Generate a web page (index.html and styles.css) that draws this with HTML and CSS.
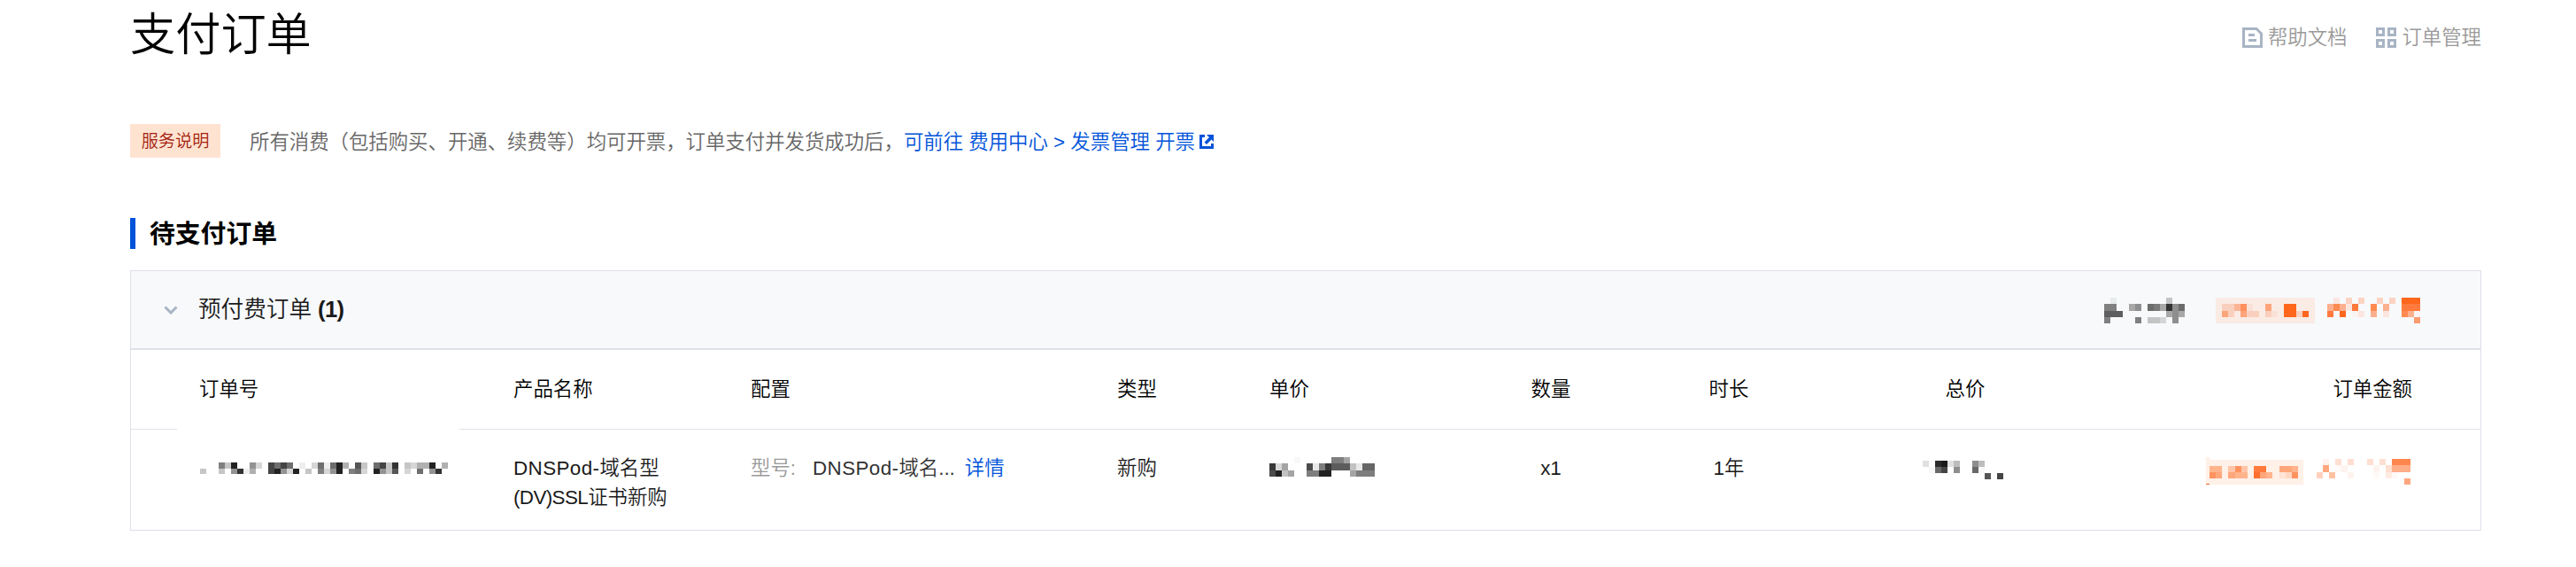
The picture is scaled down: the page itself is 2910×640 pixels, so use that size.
FILE: index.html
```html
<!DOCTYPE html>
<html lang="zh-CN">
<head>
    <meta charset="UTF-8">
    <meta name="viewport" content="width=device-width, initial-scale=1.0">
    <title>支付订单</title>
    <link rel="stylesheet" href="styles.css">
</head>
<body>

    <div class="page">
        <!-- Page header -->
        <header class="page-header">
            <h1>支付订单</h1>
            <nav class="header-links">
                <a href="#">
                    <svg class="icon" viewBox="0 0 23 23">
                        <path d="M1.5 1.5H16L21.5 7V21.5H1.5Z" fill="none" stroke="#a8b4c4" stroke-width="3"/>
                        <path d="M7 7h7v3H7zM7 13h9v3H7z" fill="#a8b4c4"/>
                    </svg>
                    <span>帮助文档</span>
                </a>
                <a href="#">
                    <svg class="icon" viewBox="0 0 23 23">
                        <path d="M1.5 1.5h7v7h-7zM14.5 1.5h7v7h-7zM1.5 14.5h7v7h-7zM14.5 14.5h7v7h-7z" fill="none" stroke="#a8b4c4" stroke-width="3"/>
                    </svg>
                    <span>订单管理</span>
                </a>
            </nav>
        </header>

        <!-- Service notice -->
        <div class="notice">
            <span class="notice-tag">服务说明</span>
            <p>所有消费（包括购买、开通、续费等）均可开票，订单支付并发货成功后，<a href="#">可前往 费用中心 &gt; 发票管理 开票<svg class="link-icon" viewBox="0 0 16 16"><path d="M0 0h6v3H3v10h10V10h3v6H0zM8 0h8v8l-2.500-2.500-5.500 5.500L5.500 8.500l5.500-5.500z" fill="#0052d9"/></svg></a></p>
        </div>

        <h2>待支付订单</h2>

        <!-- Order panel -->
        <section class="panel">
            <div class="panel-header">
                <svg class="chevron" viewBox="0 0 16 10"><path d="M1.500 1.500L8 8l6.500-6.500" fill="none" stroke="#a8b4c4" stroke-width="3"/></svg>
                <span class="panel-title">预付费订单 <b>(1)</b></span>
                <div class="panel-amount">
                    <svg class="mosaic header-label" viewBox="0 0 13 4" preserveAspectRatio="none">
                        <path fill="#e8ebeb" d="M1 0h1v1h-1z"/>
                        <path fill="#c4c4c4" d="M10 0h1v1h-1zM7 3h2v1h-2z"/>
                        <path fill="#808080" d="M0 1h2v1h-2zM0 3h1v1h-1zM5 3h1v1h-1z"/>
                        <path fill="#a8a8a8" d="M4 1h1v1h-1zM9 1h1v1h-1zM10 2h1v1h-1zM12 2h1v1h-1z"/>
                        <path fill="#8e8e8e" d="M5 1h1v1h-1zM11 1h1v3h-1z"/>
                        <path fill="#6c6c6c" d="M7 1h1v1h-1zM12 1h1v1h-1z"/>
                        <path fill="#7a7a7a" d="M8 1h1v1h-1z"/>
                        <path fill="#333" d="M10 1h1v1h-1z"/>
                        <path fill="#5e5e60" d="M0 2h3v1h-3z"/>
                        <path fill="#d4d6d6" d="M9 3h1v1h-1z"/>
                    </svg>
                    <svg class="mosaic header-badge" viewBox="0 0 16 4" preserveAspectRatio="none">
                        <path fill="#faebe4" d="M0 0h16v4h-16z"/>
                        <path fill="#f9d0bd" d="M1 1h2v1h-2zM2 2h1v1h-1zM5 2h2v1h-2zM8 2h1v1h-1zM13 2h1v1h-1z"/>
                        <path fill="#fcb497" d="M3 1h1v1h-1z"/>
                        <path fill="#ff8f5c" d="M4 1h1v1h-1z"/>
                        <path fill="#fae1d7" d="M5 1h1v1h-1zM9 2h1v1h-1z"/>
                        <path fill="#fda47a" d="M8 1h1v1h-1zM1 2h1v1h-1zM4 2h1v1h-1z"/>
                        <path fill="#ff671c" d="M11 1h2v2h-2zM14 2h1v1h-1z"/>
                    </svg>
                    <svg class="mosaic header-total" viewBox="0 0 15 4" preserveAspectRatio="none">
                        <path fill="#fbe6df" d="M1 0h1v1h-1zM3 1h1v1h-1zM5 2h1v1h-1zM9 2h1v1h-1z"/>
                        <path fill="#fcd3c3" d="M3 0h1v1h-1zM5 0h1v1h-1zM8 0h1v1h-1zM10 0h1v1h-1z"/>
                        <path fill="#ff671c" d="M12 0h3v1h-3zM2 2h1v1h-1z"/>
                        <path fill="#fcb08f" d="M0 1h1v1h-1zM2 1h1v1h-1zM9 1h1v1h-1zM7 2h1v1h-1zM13 2h1v1h-1z"/>
                        <path fill="#ff8a52" d="M1 1h1v1h-1zM7 1h1v1h-1zM12 2h1v1h-1z"/>
                        <path fill="#ff7a3c" d="M4 1h1v1h-1zM12 1h3v1h-3zM0 2h1v1h-1z"/>
                        <path fill="#f9f3f2" d="M4 2h1v1h-1zM14 2h1v1h-1z"/>
                        <path fill="#fd9b70" d="M14 3h1v1h-1z"/>
                    </svg>
                </div>
            </div>

            <div class="row row-head">
                <div class="cell spacer"></div>
                <div class="cell order-no">订单号</div>
                <div class="cell">产品名称</div>
                <div class="cell">配置</div>
                <div class="cell">类型</div>
                <div class="cell">单价</div>
                <div class="cell center">数量</div>
                <div class="cell center">时长</div>
                <div class="cell center">总价</div>
                <div class="cell right">订单金额</div>
            </div>

            <div class="row row-body">
                <div class="cell spacer"></div>
                <div class="cell order-no">
                    <svg class="mosaic order-id" viewBox="0 0 40 2" preserveAspectRatio="none">
                        <path fill="#222" d="M5 0h1v1h-1zM22 0h1v2h-1zM37 0h1v1h-1zM12 1h1v1h-1zM15 1h1v1h-1zM28 1h1v1h-1z"/>
                        <path fill="#333" d="M31 0h1v1h-1zM6 1h1v1h-1zM38 1h1v1h-1z"/>
                        <path fill="#444" d="M11 0h1v2h-1zM13 0h1v1h-1zM29 0h1v1h-1z"/>
                        <path fill="#555" d="M25 0h1v1h-1zM31 1h1v1h-1z"/>
                        <path fill="#6e6e6e" d="M12 0h1v1h-1zM14 0h1v1h-1zM19 0h1v1h-1zM21 0h1v1h-1zM28 0h1v1h-1zM25 1h1v1h-1zM35 1h1v1h-1z"/>
                        <path fill="#808080" d="M3 0h1v1h-1zM19 1h1v1h-1zM24 1h1v1h-1z"/>
                        <path fill="#929292" d="M8 0h1v1h-1zM5 1h1v1h-1zM13 1h1v1h-1zM21 1h1v1h-1zM29 1h1v1h-1zM37 1h1v1h-1z"/>
                        <path fill="#b0b0b0" d="M23 0h1v1h-1zM35 0h2v1h-2zM39 0h1v1h-1zM8 1h1v1h-1z"/>
                        <path fill="#c6c6c6" d="M4 0h1v1h-1zM26 0h1v1h-1zM30 0h1v2h-1zM33 0h1v1h-1zM0 1h1v1h-1zM3 1h1v1h-1zM17 1h1v1h-1z"/>
                        <path fill="#d6d6d6" d="M9 0h1v1h-1zM18 0h1v1h-1zM34 0h1v1h-1zM14 1h1v1h-1zM20 1h1v1h-1zM26 1h1v1h-1zM33 1h1v1h-1z"/>
                        <path fill="#eee" d="M16 0h1v1h-1zM20 0h1v1h-1zM7 1h1v1h-1z"/>
                    </svg>
                </div>
                <div class="cell"><span class="latin-wide">DNSPod-</span>域名型<br><span class="latin-tight">(DV)SSL</span>证书新购</div>
                <div class="cell config">
                    <span class="config-label">型号:</span>
                    <span class="config-value"><span class="latin-wide">DNSPod-</span>域名...</span>
                    <a href="#">详情</a>
                </div>
                <div class="cell">新购</div>
                <div class="cell">
                    <svg class="mosaic unit-price" viewBox="0 0 17 3" preserveAspectRatio="none">
                        <path fill="#222" d="M1 2h1v1h-1zM8 2h2v1h-2z"/>
                        <path fill="#383838" d="M0 1h1v1h-1zM9 1h1v1h-1z"/>
                        <path fill="#4c4c4c" d="M6 1h1v1h-1zM0 2h1v1h-1z"/>
                        <path fill="#5c5c5c" d="M10 1h3v1h-3z"/>
                        <path fill="#666" d="M15 1h2v1h-2z"/>
                        <path fill="#7e7e7e" d="M10 0h2v1h-2zM8 1h1v1h-1zM6 2h2v1h-2zM14 2h3v1h-3z"/>
                        <path fill="#a4a4a4" d="M12 0h1v1h-1zM2 1h1v1h-1zM3 2h1v1h-1zM13 2h1v1h-1z"/>
                        <path fill="#c2c2c2" d="M13 1h1v1h-1zM2 2h1v1h-1z"/>
                        <path fill="#d8d8d8" d="M1 1h1v1h-1z"/>
                        <path fill="#e8e8e8" d="M7 1h1v1h-1zM14 1h1v1h-1z"/>
                        <path fill="#f8f8f8" d="M4 0h1v1h-1z"/>
                    </svg>
                </div>
                <div class="cell center">x1</div>
                <div class="cell center">1年</div>
                <div class="cell center">
                    <svg class="mosaic total-price" viewBox="0 0 13 3" preserveAspectRatio="none">
                        <path fill="#2a2a2a" d="M2 0h1v1h-1z"/>
                        <path fill="#1a1a1a" d="M3 0h1v1h-1z"/>
                        <path fill="#444" d="M3 1h1v1h-1zM12 2h1v1h-1z"/>
                        <path fill="#555" d="M10 2h1v1h-1z"/>
                        <path fill="#686868" d="M2 1h1v1h-1zM8 1h1v1h-1z"/>
                        <path fill="#8e8e8e" d="M8 0h1v1h-1zM5 1h1v1h-1z"/>
                        <path fill="#bdbdbd" d="M5 0h1v1h-1zM9 0h1v1h-1z"/>
                        <path fill="#e0e0e0" d="M0 0h1v1h-1zM4 0h1v1h-1z"/>
                        <path fill="#f8f8f8" d="M1 1h1v1h-1zM9 1h1v1h-1z"/>
                    </svg>
                </div>
                <div class="cell right">
                    <div class="row-amount">
                        <div class="row-badge">
                            <svg class="mosaic badge-cells" viewBox="0 0 14 2" preserveAspectRatio="none">
                                <path fill="#ffb48c" d="M0 0h2v1h-2zM13 0h1v1h-1zM4 1h2v1h-2zM9 1h1v1h-1z"/>
                                <path fill="#ffc5a9" d="M3 0h1v1h-1zM5 0h1v1h-1z"/>
                                <path fill="#ff935f" d="M4 0h1v1h-1zM0 1h1v1h-1zM13 1h1v1h-1z"/>
                                <path fill="#ff7a3b" d="M7 0h2v1h-2z"/>
                                <path fill="#ff6f2b" d="M7 1h1v1h-1z"/>
                                <path fill="#ffa67a" d="M11 0h2v1h-2zM1 1h1v1h-1zM3 1h1v1h-1zM8 1h1v1h-1z"/>
                                <path fill="#ffe3d6" d="M11 1h1v1h-1z"/>
                                <path fill="#ffd6c2" d="M12 1h1v1h-1z"/>
                            </svg>
                        </div>
                        <svg class="mosaic row-total" viewBox="0 0 15 4" preserveAspectRatio="none">
                            <path fill="#fff3ee" d="M1 0h1v1h-1zM4 1h1v1h-1zM9 1h1v1h-1zM5 2h1v1h-1z"/>
                            <path fill="#ffdfd1" d="M3 0h1v1h-1zM5 0h1v1h-1zM8 0h1v1h-1zM10 0h1v1h-1zM11 1h1v1h-1z"/>
                            <path fill="#ff864c" d="M12 0h3v1h-3z"/>
                            <path fill="#ffa77f" d="M1 1h1v1h-1zM14 3h1v1h-1z"/>
                            <path fill="#ffae88" d="M12 1h3v1h-3z"/>
                            <path fill="#fff9f7" d="M3 1h1v1h-1zM9 2h1v1h-1zM12 2h1v1h-1z"/>
                            <path fill="#ffd1bc" d="M0 2h1v1h-1z"/>
                            <path fill="#ffc1a4" d="M2 2h1v1h-1z"/>
                            <path fill="#ffeae2" d="M11 2h1v1h-1z"/>
                        </svg>
                    </div>
                </div>
            </div>
        </section>
    </div>

</body>
</html>
```
FILE: styles.css
```css
* {
    box-sizing: border-box;
}

body {
    margin: 0;
    background-color: #fff;
    color: #1a1a1a;
    font-family: "Liberation Sans", "Noto Sans CJK SC", sans-serif;
    font-size: 22.4px;
    font-weight: 350;
    line-height: 33px;
}

a {
    color: #0052d9;
    text-decoration: none;
}

svg {
    display: block;
    flex: none;
}

.page {
    width: 2656px;
    margin-left: 147px;
}

/* Page header */
.page-header {
    display: flex;
    justify-content: space-between;
    height: 140px;
}

h1 {
    margin: 0;
    font-size: 51.2px;
    font-weight: 350;
    line-height: 79px;
    color: #000;
}

.header-links {
    display: flex;
    gap: 33px;
    height: 85px;
    align-items: center;
}

.header-links a {
    display: flex;
    align-items: center;
    gap: 6px;
    color: #999;
}

.icon {
    width: 23px;
    height: 23px;
}

/* Service notice */
.notice {
    display: flex;
    align-items: center;
    gap: 33px;
    height: 38px;
}

.notice-tag {
    width: 102px;
    height: 38px;
    background-color: #ffe3d1;
    color: #a3210f;
    font-size: 19.2px;
    line-height: 39px;
    text-align: center;
}

.notice p {
    margin: 2px 0 0;
    color: #666;
}

.link-icon {
    display: inline-block;
    width: 16px;
    height: 16px;
    margin-left: 5px;
}

h2 {
    height: 35px;
    margin: 68px 0 24px;
    padding-left: 16px;
    border-left: 6px solid #0052d9;
    font-size: 28.8px;
    line-height: 37px;
    color: #000;
}

/* Order panel */
.panel {
    height: 294px;
    border: 1px solid #dfe1ea;
}

.panel-header {
    display: flex;
    align-items: center;
    height: 89px;
    padding: 0 68px 0 37px;
    background-color: #f7f9fb;
    border-bottom: 2px solid #dfe1ea;
}

.chevron {
    width: 16px;
    height: 10px;
}

.panel-title {
    margin-left: 23px;
    font-size: 25.6px;
}

.panel-title b {
    letter-spacing: -0.7px;
}

.panel-amount {
    display: flex;
    margin: 2px 0 0 auto;
}

.mosaic {
    shape-rendering: crispEdges;
}

.header-label {
    width: 91px;
    height: 29px;
    margin-right: 35px;
}

.header-badge {
    width: 112px;
    height: 29px;
    margin-right: 14px;
}

.header-total {
    width: 105px;
    height: 29px;
}

/* Rows */
.row {
    display: grid;
    grid-template-columns: 52px 319px 268px 414px 172px 279px 200px 202px 332px 1fr;
}

.cell {
    padding-left: 61px;
}

.spacer {
    padding-left: 0;
}

.order-no {
    padding-left: 25px;
}

.center {
    padding-left: 0;
    text-align: center;
}

.right {
    padding-right: 77px;
    text-align: right;
}

.row-head {
    height: 90px;
    line-height: 89px;
    color: #000;
}

.row-head .cell {
    border-bottom: 1px solid #dfe1ea;
}

.row-head .order-no {
    border-bottom: none;
}

.row-body {
    height: 113px;
    padding-top: 27px;
}

.latin-wide {
    letter-spacing: 0.4px;
}

.latin-tight {
    letter-spacing: -0.6px;
}

.order-id {
    width: 280px;
    height: 13px;
    margin: 10px 0 0 1px;
}

.config {
    display: flex;
    color: #333;
}

.config-label {
    margin-right: 19px;
    color: #999;
}

.config-value {
    margin-right: 11px;
}

.unit-price {
    width: 119px;
    height: 22px;
    margin: 4px 0 0;
}

.total-price {
    width: 91px;
    height: 21px;
    margin: 8px 0 0 118px;
}

.row-amount {
    display: flex;
    justify-content: flex-end;
    margin: 6px 2px 0 0;
}

.row-badge {
    position: relative;
    width: 106px;
    height: 28px;
    margin: 1px 15px 0 0;
    padding: 7px 0 0;
    background-color: #fff0e8;
}

/* Edge of the badge, a little taller than the fill */
.row-badge::before {
    content: "";
    position: absolute;
    top: -3px;
    left: -4px;
    width: 4px;
    height: 30px;
    background-color: #fff0e8;
    border-bottom: 1px solid #e8622a;
}

.badge-cells {
    width: 100px;
    height: 14px;
}

.row-total {
    width: 106px;
    height: 29px;
}
```
